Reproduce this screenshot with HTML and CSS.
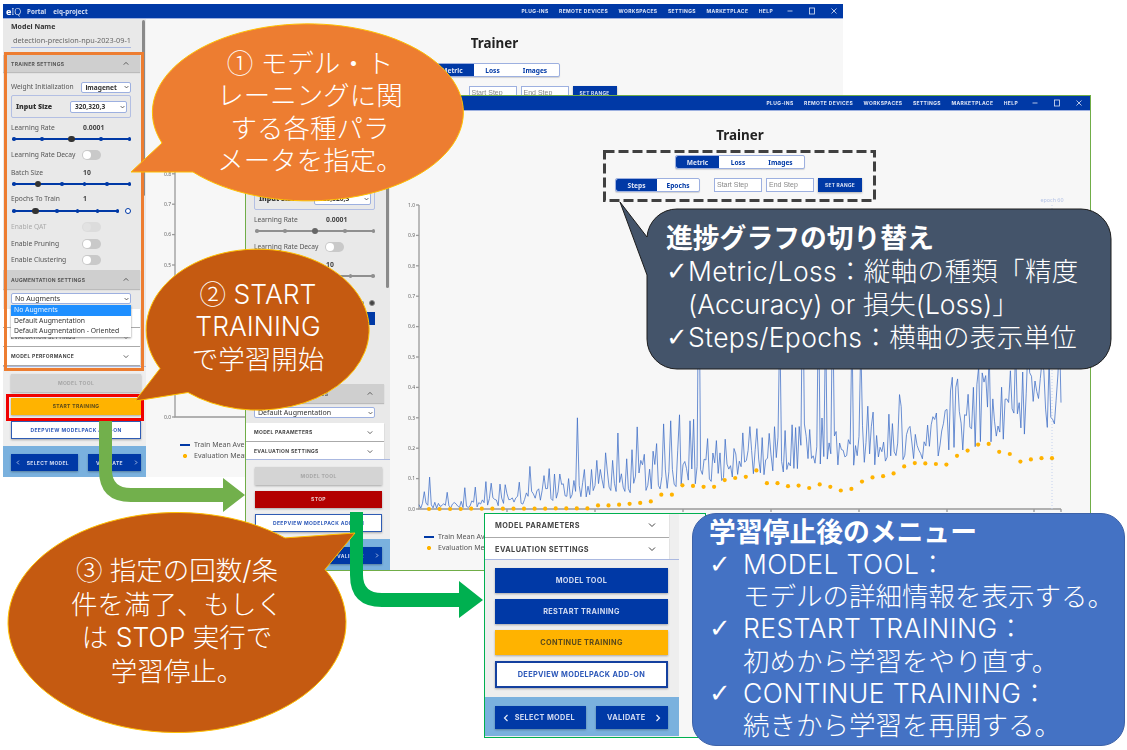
FILE: index.html
```html
<!DOCTYPE html>
<html lang="ja">
<head>
<meta charset="utf-8">
<title>eIQ Portal Trainer</title>
<link rel="stylesheet" href="styles.css">
</head>
<body>
<div class="canvas">

  <!-- first window: before training -->
  <div class="window w1">
    <header class="topbar">
      <span class="logo"><b>e</b>IQ</span><span class="crumb">Portal</span><span class="crumb">eiq-project</span>
      <nav class="nav"><a>PLUG-INS</a><a>REMOTE DEVICES</a><a>WORKSPACES</a><a>SETTINGS</a><a>MARKETPLACE</a><a>HELP</a></nav>
      <div class="winctl">
        <svg viewBox="0 0 8 8"><path d="M1.5 4h5"/></svg>
        <svg viewBox="0 0 8 8"><rect x="1.5" y="1" width="5" height="6"/></svg>
        <svg viewBox="0 0 8 8"><path d="M1.5 1.5l5 5M6.5 1.5l-5 5"/></svg>
      </div>
    </header>
    <div class="body">
      <aside class="side">
        <div class="scroll">
          <span class="thumb"></span>
          <div class="model"><label>Model Name</label><div class="model-input">detection-precision-npu-2023-09-11</div></div>
          <div class="band">TRAINER SETTINGS<svg class="chev" viewBox="0 0 8 6"><path d="M1 4.5l3-3 3 3"/></svg></div>
          <div class="row r-init"><span>Weight Initialization</span><div class="sel sel-init">imagenet<svg class="chev" viewBox="0 0 8 6"><path d="M1 1.5l3 3 3-3"/></svg></div></div>
          <div class="input-box"><strong>Input Size</strong><div class="sel sel-size">320,320,3<svg class="chev" viewBox="0 0 8 6"><path d="M1 1.5l3 3 3-3"/></svg></div></div>
          <div class="row r-lr"><span>Learning Rate</span><strong>0.0001</strong></div>
          <div class="slider s-lr"><i></i><i></i><i class="knob"></i><i></i><i></i></div>
          <div class="row r-decay"><span>Learning Rate Decay</span><em class="toggle"></em></div>
          <div class="row r-batch"><span>Batch Size</span><strong>10</strong></div>
          <div class="slider s-batch"><i></i><i class="knob"></i><i></i><i></i><i></i><i></i></div>
          <div class="row r-epochs"><span>Epochs To Train</span><strong>1</strong></div>
          <div class="slider-wrap s-epochs"><div class="slider"><i></i><i class="knob"></i><i></i><i></i><i></i><i></i></div><u class="ring"></u></div>
          <div class="row r-qat off"><span>Enable QAT</span><em class="toggle"></em></div>
          <div class="row r-prune"><span>Enable Pruning</span><em class="toggle"></em></div>
          <div class="row r-cluster"><span>Enable Clustering</span><em class="toggle"></em></div>
          <div class="band band-aug">AUGMENTATION SETTINGS<svg class="chev" viewBox="0 0 8 6"><path d="M1 4.5l3-3 3 3"/></svg></div>
          <div class="sel sel-aug">No Augments<svg class="chev" viewBox="0 0 8 6"><path d="M1 1.5l3 3 3-3"/></svg>
            <ul class="menu"><li class="hot">No Augments</li><li>Default Augmentation</li><li>Default Augmentation - Oriented</li></ul>
          </div>
          <div class="panel panel-first">MODEL PARAMETERS<svg class="chev" viewBox="0 0 8 6"><path d="M1 1.5l3 3 3-3"/></svg></div>
          <div class="panel">EVALUATION SETTINGS<svg class="chev" viewBox="0 0 8 6"><path d="M1 1.5l3 3 3-3"/></svg></div>
          <div class="panel">MODEL PERFORMANCE<svg class="chev" viewBox="0 0 8 6"><path d="M1 1.5l3 3 3-3"/></svg></div>
          <div class="panel"></div>
        </div>
        <div class="actions">
          <button class="btn gray">MODEL TOOL</button>
          <button class="btn amber">START TRAINING</button>
          <button class="btn outline">DEEPVIEW MODELPACK ADD-ON</button>
        </div>
        <div class="foot">
          <button class="btn blue nav-l"><svg class="chev" viewBox="0 0 6 8"><path d="M4.5 1l-3 3 3 3"/></svg>SELECT MODEL</button>
          <button class="btn blue nav-r">VALIDATE<svg class="chev" viewBox="0 0 6 8"><path d="M1.5 1l3 3-3 3"/></svg></button>
        </div>
      </aside>
      <main class="main">
        <h1>Trainer</h1>
        <div class="tabs"><span class="on t-a">Metric</span><span class="t-b">Loss</span><span class="t-c">Images</span></div>
        <div class="range">
          <div class="tabs steps"><span class="on t-s">Steps</span><span class="t-e">Epochs</span></div>
          <div class="field">Start Step</div><div class="field">End Step</div><button class="setrange">SET RANGE</button>
        </div>
        <svg class="chart" viewBox="0 0 699 330"></svg>
        <div class="legend">
          <div><i class="dash"></i>Train Mean Average Precision</div>
          <div><i class="dot"></i>Evaluation Mean Average Precision</div>
        </div>
      </main>
    </div>
  </div>

  <!-- second window: while training -->
  <div class="window w2">
    <header class="topbar">
      <span class="logo"><b>e</b>IQ</span><span class="crumb">Portal</span><span class="crumb">eiq-project</span>
      <nav class="nav"><a>PLUG-INS</a><a>REMOTE DEVICES</a><a>WORKSPACES</a><a>SETTINGS</a><a>MARKETPLACE</a><a>HELP</a></nav>
      <div class="winctl">
        <svg viewBox="0 0 8 8"><path d="M1.5 4h5"/></svg>
        <svg viewBox="0 0 8 8"><rect x="1.5" y="1" width="5" height="6"/></svg>
        <svg viewBox="0 0 8 8"><path d="M1.5 1.5l5 5M6.5 1.5l-5 5"/></svg>
      </div>
    </header>
    <div class="body">
      <aside class="side">
        <div class="scroll locked">
          <span class="thumb"></span>
          <div class="model"><label>Model Name</label><div class="model-input">detection-precision-npu-2023-09-11</div></div>
          <div class="band">TRAINER SETTINGS<svg class="chev" viewBox="0 0 8 6"><path d="M1 4.5l3-3 3 3"/></svg></div>
          <div class="row r-init"><span>Weight Initialization</span><div class="sel sel-init">imagenet<svg class="chev" viewBox="0 0 8 6"><path d="M1 1.5l3 3 3-3"/></svg></div></div>
          <div class="input-box"><strong>Input Size</strong><div class="sel sel-size">320,320,3<svg class="chev" viewBox="0 0 8 6"><path d="M1 1.5l3 3 3-3"/></svg></div></div>
          <div class="row r-lr"><span>Learning Rate</span><strong>0.0001</strong></div>
          <div class="slider s-lr"><i></i><i></i><i class="knob"></i><i></i><i></i></div>
          <div class="row r-decay"><span>Learning Rate Decay</span><em class="toggle"></em></div>
          <div class="row r-batch"><span>Batch Size</span><strong>10</strong></div>
          <div class="slider s-batch"><i></i><i class="knob"></i><i></i><i></i><i></i><i></i></div>
          <div class="row r-epochs"><span>Epochs To Train</span><strong>60</strong></div>
          <div class="slider-wrap s-epochs"><div class="slider"><i></i><i></i><i></i><i></i><i></i><i></i></div><u class="ring solid"></u></div>
          <div class="extra"><span class="extra-btn"></span></div>
          <div class="row r-qat off"><span>Enable QAT</span><em class="toggle"></em></div>
          <div class="row r-prune"><span>Enable Pruning</span><em class="toggle"></em></div>
          <div class="row r-cluster"><span>Enable Clustering</span><em class="toggle"></em></div>
          <div class="band band-aug">AUGMENTATION SETTINGS<svg class="chev" viewBox="0 0 8 6"><path d="M1 4.5l3-3 3 3"/></svg></div>
          <div class="sel sel-aug">Default Augmentation<svg class="chev" viewBox="0 0 8 6"><path d="M1 1.5l3 3 3-3"/></svg></div>
          <div class="panel panel-first">MODEL PARAMETERS<svg class="chev" viewBox="0 0 8 6"><path d="M1 1.5l3 3 3-3"/></svg></div>
          <div class="panel">EVALUATION SETTINGS<svg class="chev" viewBox="0 0 8 6"><path d="M1 1.5l3 3 3-3"/></svg></div>
        </div>
        <div class="actions">
          <button class="btn gray">MODEL TOOL</button>
          <button class="btn stop">STOP</button>
          <button class="btn outline">DEEPVIEW MODELPACK ADD-ON</button>
        </div>
        <div class="foot">
          <button class="btn blue nav-l"><svg class="chev" viewBox="0 0 6 8"><path d="M4.5 1l-3 3 3 3"/></svg>SELECT MODEL</button>
          <button class="btn blue nav-r">VALIDATE<svg class="chev" viewBox="0 0 6 8"><path d="M1.5 1l3 3-3 3"/></svg></button>
        </div>
      </aside>
      <main class="main">
        <h1>Trainer</h1>
        <div class="tabs"><span class="on t-a">Metric</span><span class="t-b">Loss</span><span class="t-c">Images</span></div>
        <div class="range">
          <div class="tabs steps"><span class="on t-s">Steps</span><span class="t-e">Epochs</span></div>
          <div class="field">Start Step</div><div class="field">End Step</div><button class="setrange">SET RANGE</button>
        </div>
        <svg class="chart" data-series="1" viewBox="0 0 699 330"></svg>
        <div class="legend">
          <div><i class="dash"></i>Train Mean Average Precision</div>
          <div><i class="dot"></i>Evaluation Mean Average Precision</div>
        </div>
      </main>
    </div>
  </div>

  <svg class="overlay" viewBox="0 0 1127 750">
    <path class="arrow-a" d="M99 420V470Q99 502 131 502H223V512L245 495L223 478V488H131Q112 488 112 470V420Z"/>
    <path class="arrow-b" d="M350 512V575Q350 607 382 607H459V618L483 600L459 581V593H382Q363 593 363 575V512Z"/>
    <rect class="dashed" x="604.5" y="151.5" width="270" height="49"/>
  </svg>

  <!-- third window: after stopping, enlarged -->
  <div class="window w3">
    <div class="body">
      <aside class="side">
        <div class="scroll">
          <div class="panel">MODEL PARAMETERS<svg class="chev" viewBox="0 0 8 6"><path d="M1 1.5l3 3 3-3"/></svg></div>
          <div class="panel">EVALUATION SETTINGS<svg class="chev" viewBox="0 0 8 6"><path d="M1 1.5l3 3 3-3"/></svg></div>
        </div>
        <div class="actions">
          <button class="btn blue">MODEL TOOL</button>
          <button class="btn blue">RESTART TRAINING</button>
          <button class="btn amber">CONTINUE TRAINING</button>
          <button class="btn outline">DEEPVIEW MODELPACK ADD-ON</button>
        </div>
        <div class="foot">
          <button class="btn blue nav-l"><svg class="chev" viewBox="0 0 6 8"><path d="M4.5 1l-3 3 3 3"/></svg>SELECT MODEL</button>
          <button class="btn blue nav-r">VALIDATE<svg class="chev" viewBox="0 0 6 8"><path d="M1.5 1l3 3-3 3"/></svg></button>
        </div>
      </aside>
      <main class="main"></main>
    </div>
  </div>

  <div class="frame frame-orange"></div>
  <div class="frame frame-red"></div>

  <svg class="overlay" viewBox="0 0 1127 750">
    <path class="bubble light" d="M162 143L131 172L193 172A155.5 88.5 0 1 0 162 143Z"/>
    <path class="bubble" d="M160 368.5L135 401L188 392.5A111.5 80.5 0 1 0 160 368.5Z"/>
    <path class="bubble" d="M285 537.9L355 533L325 569.4A169 110 0 1 1 285 537.9Z"/>
    <path class="slate" d="M677 209H1081A30 30 0 0 1 1111 239V339A30 30 0 0 1 1081 369H677A30 30 0 0 1 647 339V275L620 202L647 237A30 30 0 0 1 677 209Z"/>
  </svg>

  <p class="note note-1"><span class="num">①</span> モデル・ト<br>レーニングに関<br>する各種パラ<br>メータを指定。</p>
  <p class="note note-2"><span class="num">②</span> START<br>TRAINING<br>で学習開始</p>
  <p class="note note-3"><span class="num">③</span> 指定の回数/条<br>件を満了、もしく<br>は STOP 実行で<br>学習停止。</p>

  <div class="box box-slate">
    <h2>進捗グラフの切り替え</h2>
    <p><span class="tick">✓</span><span>Metric/Loss：縦軸の種類「精度<br><span class="plain">(Accuracy) or 損失(Loss)」</span></span></p>
    <p><span class="tick">✓</span><span>Steps/Epochs：横軸の表示単位</span></p>
  </div>

  <div class="box box-blue">
    <h2>学習停止後のメニュー</h2>
    <p><span class="tick">✓</span><span class="item">MODEL TOOL：<br>モデルの詳細情報を表示する。</span></p>
    <p><span class="tick">✓</span><span class="item">RESTART TRAINING：<br>初めから学習をやり直す。</span></p>
    <p><span class="tick">✓</span><span class="item">CONTINUE TRAINING：<br>続きから学習を再開する。</span></p>
  </div>
</div>
<script src="chart.js"></script>
</body>
</html>
```
FILE: styles.css
```css
:root {
  --navy: #0039a6;
  --amber: #ffb300;
  --ui: "Noto Sans", "Liberation Sans", sans-serif;
  --caps: "Inter", "Liberation Sans", sans-serif;
  --jp: "Inter", "Noto Sans CJK JP", "Noto Sans", sans-serif;
}
* { box-sizing: border-box; }
html, body { margin: 0; background: #fff; }
.canvas { position: relative; width: 1127px; height: 750px; overflow: hidden; font-family: var(--ui); color: #444; }

/* windows on the canvas */
.window { position: absolute; display: flex; flex-direction: column; overflow: hidden; background: #f7f7f7; filter: blur(0.3px); }
.w1 { left: 3px; top: 4px; width: 840px; height: 473px; }
.w2 { left: 245px; top: 95px; width: 846px; height: 476px; border: 1px solid #70ad47; }
.w3 { left: 484px; top: 513px; width: 222px; height: 225px; border: 1px solid #00b050; }

.topbar { flex: none; height: 14px; display: flex; align-items: center; padding: 0 0 0 3px; background: var(--navy); color: #dfe6f6; box-shadow: 0 1px 0 #9db0e0; position: relative; z-index: 2; }
.logo { font: 300 9px var(--ui); color: #fff; width: 21px; }
.logo b { font-weight: 800; }
.crumb { font: 700 6.2px var(--ui); color: #d6e0f5; margin-right: 7px; letter-spacing: .1px; }
.crumb + .crumb { margin-right: 0; }
.nav { margin-left: auto; display: flex; gap: 10.4px; }
.nav a { font: 700 5px var(--caps); letter-spacing: .36px; color: #dfe6f6; }
.winctl { display: flex; gap: 14px; margin: 0 7px 0 13px; }
.w1 .winctl { margin-right: 5px; }
.winctl svg { width: 8px; height: 8px; fill: none; stroke: #dfe6f6; stroke-width: .8; }

.body { flex: 1; min-height: 0; display: flex; }
.side { flex: none; display: flex; flex-direction: column; background: #e9e9e9; }
.w1 .side { width: 143px; }
.w2 .side { width: 144px; }
.w3 .side { width: 194px; }

.scroll { flex: 1; min-height: 0; position: relative; padding-right: 6px; display: flex; flex-direction: column; overflow: hidden; border-bottom: 1px solid #aab8e0; }
.thumb { position: absolute; right: 1px; top: 2px; width: 3px; height: 176px; border-radius: 2px; background: #8a8a8a; }
.model { flex: none; height: 37px; padding: 4px 0 0 8px; }
.model label { display: block; font: 700 7px/9px var(--ui); color: #333; }
.model-input { margin: 4px 0 0 0; width: 120px; height: 13px; overflow: hidden; white-space: nowrap; font: 7.3px/11px var(--ui); color: #666; padding-left: 2px; border-bottom: 1px solid #aab8e0; }

.band { flex: none; height: 17px; display: flex; align-items: center; justify-content: space-between; padding: 0 11px 0 8px; background: #cfcfcf; font: 700 5px var(--caps); letter-spacing: .32px; color: #555; box-shadow: 0 1px 1px #bbb; }
.band-aug { height: 19px; margin-top: 4px; }
.chev { width: 6px; height: 5px; fill: none; stroke: #444; stroke-width: 1.1; flex: none; }

.row { flex: none; height: 12px; display: flex; align-items: center; margin: 0 9px 0 8px; font: 6.7px/12px var(--ui); color: #555; }
.row span { width: 71px; white-space: nowrap; }
.row strong { font-weight: 700; font-size: 6.8px; color: #444; margin-left: 1px; }
.off { color: #aaa; }
.r-init { margin-top: 9px; }
.r-lr { margin-top: 4px; }
.r-decay { margin-top: 6px; }
.r-batch { margin-top: 6px; }
.r-epochs { margin-top: 5px; }
.r-qat { margin-top: 6px; }
.r-prune { margin-top: 5px; }
.r-cluster { margin-top: 4px; }

.sel { position: relative; display: flex; align-items: center; justify-content: space-between; height: 11px; background: #fff; border: 1px solid #9db0e0; border-radius: 2px; padding: 0 1px 0 3px; font: 7px var(--ui); color: #333; }
.sel .chev { width: 5px; height: 4px; stroke: #222; }
.sel-init { width: 50px; font-weight: 700; margin-left: auto; font-size: 6.6px; }
.sel-size { width: 57px; height: 12px; margin-left: auto; font-weight: 700; font-size: 6.6px; padding-left: 4px; }
.input-box { flex: none; display: flex; align-items: center; height: 23px; margin: 2px 9px 0 8px; padding: 0 3px 0 4px; border: 1px solid #b3bfe3; border-radius: 2px; font: 700 7px var(--ui); color: #333; }
.sel-aug { flex: none; margin: 4px 9px 0 8px; }
.menu { position: absolute; left: -1px; right: -1px; top: 11px; margin: 0; padding: 0; list-style: none; background: #fff; box-shadow: 0 1px 2px #888; z-index: 3; }
.menu li { height: 10.5px; line-height: 10.5px; padding-left: 3px; font-size: 6.8px; white-space: nowrap; }
.menu .hot { background: #1e8fff; color: #eaf3ff; }

.slider { flex: none; position: relative; height: 8px; margin: 1px 9px 0 9px; display: flex; align-items: center; justify-content: space-between; }
.slider::before { content: ""; position: absolute; left: 1px; right: 1px; top: 3px; height: 2px; background: var(--navy); }
.slider i { position: relative; width: 3.5px; height: 3.5px; border-radius: 50%; background: var(--navy); }
.slider .knob { width: 6.5px; height: 6.5px; background: #333; }
.slider-wrap { flex: none; display: flex; align-items: center; margin: 2px 9px 0 9px; }
.slider-wrap .slider { flex: 1; margin: 0; }
.ring { flex: none; width: 6.5px; height: 6.5px; margin-left: 5px; border-radius: 50%; border: 1.2px solid var(--navy); background: #fff; }
.toggle { display: block; width: 19px; height: 9.5px; border-radius: 5px; background: #c9c9c9; position: relative; }
.toggle::before { content: ""; position: absolute; left: .5px; top: .5px; width: 8.5px; height: 8.5px; border-radius: 50%; background: #fff; }
.off .toggle { background: #dcdcdc; }
.off .toggle::before { background: #e2e2e2; }

.panel { flex: none; height: 18px; margin-bottom: 1px; display: flex; align-items: center; justify-content: space-between; padding: 0 11px 0 8px; background: #fff; font: 700 5px var(--caps); letter-spacing: .32px; color: #444; box-shadow: 0 1px 1px #aaa; }
.panel-first { margin-top: 5px; }

.actions { flex: none; height: 79px; padding: 7px 5px 0 8px; display: flex; flex-direction: column; gap: 6px; background: #eee; }
.btn { display: flex; align-items: center; justify-content: center; height: 17.5px; padding: 0; border: 0; font: 700 5px var(--caps); letter-spacing: .32px; box-shadow: 0 1px 2px rgba(0,0,0,.3); }
.gray { background: #d4d4d4; color: #a6a6a6; }
.amber { background: var(--amber); color: #5a4a1a; }
.stop { background: #b30000; color: #e8c8c8; }
.blue { background: var(--navy); color: #d3dcf2; }
.outline { background: #fff; color: #2a56b8; border: 1px solid #2f5cb4; letter-spacing: .4px; }
.foot { flex: none; height: 31px; padding: 8px 5px 0 8px; display: flex; justify-content: space-between; background: #7ab1de; }
.foot .btn { height: 17px; }
.foot .chev { stroke: #e6ecfa; width: 4px; height: 5px; }
.nav-l { width: 67px; justify-content: space-between; padding: 0 9px 0 5px; }
.nav-r { width: 53px; justify-content: space-between; padding: 0 3px 0 8px; }

.main { flex: 1; min-width: 0; display: flex; flex-direction: column; align-items: center; padding-top: 15px; background: #f7f7f7; }
.main h1 { margin: 0; height: 20px; font: 700 13.4px/20px var(--ui); color: #222; }
.tabs { flex: none; display: flex; height: 14px; margin-top: 10px; background: #fff; border: 1px solid #9db0e0; border-radius: 2px; box-shadow: 0 1px 1px rgba(0,0,0,.15); }
.tabs span { display: flex; align-items: center; justify-content: center; font: 700 6.6px var(--ui); color: var(--navy); }
.tabs .on { background: var(--navy); color: #dfe6f6; border-radius: 2px 0 0 2px; }
.t-a { width: 43px; } .t-b { width: 38px; } .t-c { width: 47px; }
.t-s { width: 41px; } .t-e { width: 42px; }
.range { flex: none; display: flex; align-items: center; gap: 4px; margin: 9px 3px 0 0; height: 14px; }
.steps { margin: 0 10px 0 0; }
.field { width: 48px; height: 14px; padding-left: 2px; background: #fff; border: 1px solid #9db0e0; font: 7px/12px "Liberation Sans", sans-serif; color: #888; }
.setrange { width: 44px; height: 14px; padding: 0; border: 0; background: var(--navy); color: #dfe6f6; font: 700 4.8px var(--caps); letter-spacing: .3px; box-shadow: 0 1px 2px rgba(0,0,0,.3); }
.chart { flex: none; width: 699px; height: 330px; margin-top: 3px; align-self: flex-start; overflow: visible; }
.axis { stroke: #9a9a9a; stroke-width: 1.3; fill: none; }
.tick-label { font: 5px var(--ui); fill: #666; text-anchor: end; }
.epoch-label { font: 5.4px var(--ui); fill: #b4c3e6; text-anchor: middle; }
.guide { stroke: #c5d2ee; stroke-width: 1; stroke-dasharray: 1 2; }
.train { fill: none; stroke: #3f6fc6; stroke-width: .9; stroke-linejoin: round; opacity: .85; }
.eval { fill: var(--amber); }
.legend { align-self: flex-start; margin: 7px 0 0 34px; font: 7px/10.5px var(--ui); color: #555; white-space: nowrap; }
.legend div { display: flex; align-items: center; }
.legend i { flex: none; width: 10px; margin-right: 4px; }
.dash { height: 2px; background: var(--navy); }
.dot { height: 4px; background: radial-gradient(circle at center, var(--amber) 2px, transparent 2.2px); }

.locked .slider::before { background: #8f8f8f; }
.locked .slider i { background: #8f8f8f; }
.locked .slider .knob { background: #666; }
.locked .ring { background: #444; border-color: #888; }
.extra { flex: none; height: 13px; margin: 5px 9px 4px 8px; display: flex; justify-content: flex-end; }
.extra-btn { width: 100%; background: var(--navy); }
.w2 .actions { padding: 7px 8px 0 9px; }
.w2 .foot { padding: 8px 8px 0 9px; }

/* enlarged crop of the lower sidebar */
.w3 .side { background: #efefef; }
.w3 .scroll { flex: none; height: 44.5px; padding-right: 10px; border-bottom: 0; }
.w3 .panel { flex: none; height: 22.5px; margin-bottom: 1.5px; font-size: 7.3px; letter-spacing: .45px; padding: 0 13px 0 10px; }
.w3 .panel .chev { width: 8px; height: 6px; stroke-width: 1; }
.w3 .actions { flex: none; height: 138.5px; padding: 8px 11px 0 10px; border-top: 1px solid #aab8e0; }
.w3 .actions .btn { height: 25px; font-size: 7.3px; letter-spacing: .36px; }
.w3 .actions .outline { height: 27px; border-width: 2px; border-color: #14409f; }
.w3 .foot { height: 39px; padding: 9px 11px 0 10px; }
.w3 .foot .btn { height: 23px; font-size: 7.3px; letter-spacing: .36px; }
.w3 .foot .chev { width: 6px; height: 8px; stroke-width: 1.2; }
.w3 .nav-l { width: 91px; padding: 0 11px 0 8px; }
.w3 .nav-r { width: 72px; padding: 0 7px 0 11px; }

/* annotation layers */
.overlay { position: absolute; left: 0; top: 0; width: 1127px; height: 750px; pointer-events: none; }
.arrow-a { fill: #72b04c; }
.arrow-b { fill: #00b050; }
.dashed { fill: none; stroke: #404040; stroke-width: 3; stroke-dasharray: 10 4; }
.frame { position: absolute; }
.frame-orange { left: 4px; top: 52px; width: 140px; height: 319px; border: 3px solid #ed7d31; }
.frame-red { left: 6px; top: 394px; width: 138px; height: 27px; border: 3px solid #f00000; }
.bubble { fill: #c55a11; stroke: #ffc000; stroke-width: 1; }
.bubble.light { fill: #ed7d31; }
.slate { fill: #44546a; stroke: #1c1c1c; stroke-width: 1; }

.note { position: absolute; margin: 0; text-align: center; color: #fff; font: 300 26.5px/32.3px var(--jp); white-space: nowrap; transform: translateX(-50%); }
.num { font-family: "Noto Sans CJK JP", sans-serif; }
.note-1 { left: 310px; top: 46px; }
.note-2 { left: 258px; top: 277px; }
.note-3 { left: 177px; top: 552px; line-height: 33.6px; }

.box { position: absolute; color: #fff; font: 300 26.5px/32.6px var(--jp); white-space: nowrap; }
.box h2 { margin: 0; font: 700 26.8px/32.6px var(--jp); }
.box p { margin: 0; display: flex; }
.tick { flex: none; font-family: "DejaVu Sans", sans-serif; font-weight: 400; }
.box-slate { left: 666px; top: 222px; line-height: 33px; }
.box-slate p { letter-spacing: .35px; }
.box-slate .plain { letter-spacing: 0; }
.box-slate .tick { width: 22px; font-size: 26px; }
.box-slate h2 { line-height: 33px; }
.box-blue { left: 692px; top: 513px; width: 433px; height: 233px; padding: 1.5px 0 0 16px; background: #4472c4; border: 1px solid #3d62a8; border-radius: 24px; line-height: 32.3px; }
.box-blue .tick { width: 34px; font-size: 26px; }
.box-blue h2 { line-height: 32.3px; }
.item { display: block; }
.item::first-line { letter-spacing: .4px; }
```
FILE: chart.js
```js
(function () {
  var NS = 'http://www.w3.org/2000/svg';
  var X0 = 29, Y0 = 10, H = 304;
  function y(v) { return Y0 + (1 - v) * H; }
  function add(svg, tag, attrs, text) {
    var el = document.createElementNS(NS, tag);
    for (var k in attrs) el.setAttribute(k, attrs[k]);
    if (text) el.textContent = text;
    svg.appendChild(el);
    return el;
  }
  function lerp(table, x) {
    for (var i = 1; i < table.length; i++) {
      if (x <= table[i][0]) {
        var a = table[i - 1], b = table[i];
        return a[1] + (b[1] - a[1]) * (x - a[0]) / (b[0] - a[0]);
      }
    }
    return table[table.length - 1][1];
  }
  var seed = 20230911;
  function rnd() { seed = (seed * 1664525 + 1013904223) >>> 0; return seed / 4294967296; }

  var evalValues = [0, 0, 0, 0, .001, .001, .001, .001, .001, .001, .001, .001, .002, .002, .002, .002,
    .012, .012, .014, .017, .02, .025, .047, .047, .078, .076, .073, .073, .095, .102, .106, .127,
    .085, .085, .075, .077, .069, .081, .073, .061, .066, .09, .104, .108, .117, .14, .151, .15, .148,
    .146, .175, .192, .212, .214, .188, .181, .156, .163, .167, .167];

  // page x -> value of the tall peaks
  var peaks = [[424, .057], [429, .105], [447, .055], [465, .07], [475, .072], [485, .09], [492, .085],
    [500, .082], [505, .08], [519, .088], [530, .14], [544, .11], [549, .133], [555, .115], [560, .115],
    [568, .10], [577, .30], [585, .13], [592, .13], [597, .16], [601, .13], [605, .185], [608, .125],
    [613, .16], [618, .25], [626, .165], [632, .195], [638, .27], [645, .18], [653, .19], [657, .215],
    [663, .28], [670, .29], [680, .31], [690, .29], [693, .295], [698, .9], [780, .62], [803, .8],
    [818, .7], [825, .62], [832, .7], [852, .6], [860, .55]];
  var hi = [[419, .02], [460, .03], [500, .05], [560, .08], [600, .12], [650, .17], [700, .23], [760, .28],
    [820, .33], [880, .36], [940, .42], [1000, .55], [1061, .62]];
  var lo = [[419, .002], [500, .006], [560, .03], [620, .05], [680, .07], [720, .09], [780, .12], [850, .14],
    [900, .15], [950, .18], [1000, .22], [1061, .28]];

  function curve() {
    var pts = [], px = 419, step = 1.76;
    while (px < 1061) {
      var r = rnd();
      var v = lerp(lo, px) + (lerp(hi, px) - lerp(lo, px)) * (r * r * .55 + r * .45);
      for (var i = 0; i < peaks.length; i++) {
        if (Math.abs(peaks[i][0] - px) <= step / 2) v = peaks[i][1];
      }
      pts.push((px - 390).toFixed(1) + ',' + y(v).toFixed(1));
      px += step;
    }
    pts.push((1061 - 390) + ',' + y(.35).toFixed(1));
    return pts.join(' ');
  }

  document.querySelectorAll('.chart').forEach(function (svg) {
    for (var t = 0; t <= 10; t++) {
      var v = t / 10;
      add(svg, 'path', { 'class': 'axis', d: 'M' + (X0 - 3) + ' ' + y(v) + 'H' + X0 });
      add(svg, 'text', { 'class': 'tick-label', x: X0 - 4, y: y(v) + 1.8 }, v.toFixed(1));
    }
    add(svg, 'path', { 'class': 'axis', d: 'M' + X0 + ' ' + Y0 + 'V' + y(0) + 'H671' });
    [117, 205, 293, 381, 469, 557, 644, 671].forEach(function (x) {
      add(svg, 'path', { 'class': 'axis', d: 'M' + x + ' ' + y(0) + 'v3' });
    });
    if (!svg.dataset.series) return;
    add(svg, 'path', { 'class': 'guide', d: 'M662 10V' + y(0) });
    add(svg, 'text', { 'class': 'epoch-label', x: 662, y: 7 }, 'epoch 60');
    add(svg, 'polyline', { 'class': 'train', points: curve() });
    evalValues.forEach(function (val, i) {
      add(svg, 'circle', { 'class': 'eval', cx: (39 + i * 10.56).toFixed(1), cy: y(val).toFixed(1), r: 2.1 });
    });
  });
})();
```
